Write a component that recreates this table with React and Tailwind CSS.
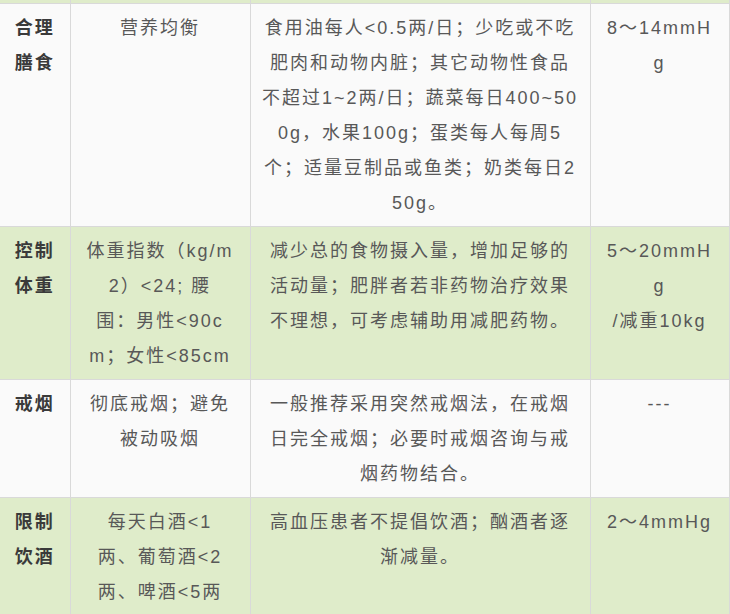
const rows = [
  {
    green: false,
    head: ["合理", "膳食"],
    target: ["营养均衡"],
    advice: [
      "食用油每人<0.5两/日；少吃或不吃",
      "肥肉和动物内脏；其它动物性食品",
      "不超过1~2两/日；蔬菜每日400~50",
      "0g，水果100g；蛋类每人每周5",
      "个；适量豆制品或鱼类；奶类每日2",
      "50g。",
    ],
    effect: ["8～14mmH", "g"],
  },
  {
    green: true,
    head: ["控制", "体重"],
    target: ["体重指数（kg/m", "2）<24; 腰", "围：男性<90c", "m；女性<85cm"],
    advice: [
      "减少总的食物摄入量，增加足够的",
      "活动量；肥胖者若非药物治疗效果",
      "不理想，可考虑辅助用减肥药物。",
    ],
    effect: ["5～20mmH", "g", "/减重10kg"],
  },
  {
    green: false,
    head: ["戒烟"],
    target: ["彻底戒烟；避免", "被动吸烟"],
    advice: [
      "一般推荐采用突然戒烟法，在戒烟",
      "日完全戒烟；必要时戒烟咨询与戒",
      "烟药物结合。",
    ],
    effect: ["---"],
  },
  {
    green: true,
    head: ["限制", "饮酒"],
    target: ["每天白酒<1", "两、葡萄酒<2", "两、啤酒<5两"],
    advice: ["高血压患者不提倡饮酒；酗酒者逐", "渐减量。"],
    effect: ["2～4mmHg"],
  },
];

function Lines({ lines }) {
  return lines.map((l, i) => (
    <div key={i} className="whitespace-nowrap">
      {l}
    </div>
  ));
}

export default function App() {
  const cell = "align-top text-center pt-[7px] pb-[5px] border-b border-r border-[#d9d9d9]";
  return (
    <div className="w-[730px] h-[614px] overflow-hidden bg-white text-[18px] leading-[35px] tracking-[2px] text-[#585858] font-['Liberation_Sans','Noto_Sans_CJK_SC',sans-serif]">
      <table className="border-collapse table-fixed w-[729px]">
        <colgroup>
          <col className="w-[70px]" />
          <col className="w-[180px]" />
          <col className="w-[340px]" />
          <col className="w-[139px]" />
        </colgroup>
        <tbody>
          <tr className="bg-[#dfecca] h-[3px]">
            <td className="border-b border-r border-[#d9d9d9] p-0" />
            <td className="border-b border-r border-[#d9d9d9] p-0" />
            <td className="border-b border-r border-[#d9d9d9] p-0" />
            <td className="border-b border-r border-[#d9d9d9] p-0" />
          </tr>
          {rows.map((r, i) => (
            <tr key={i} className={r.green ? "bg-[#dfecca]" : "bg-[#fafafa]"}>
              <td className={`${cell} font-bold text-[#3a3a3a]`}>
                <Lines lines={r.head} />
              </td>
              <td className={cell}>
                <Lines lines={r.target} />
              </td>
              <td className={cell}>
                <Lines lines={r.advice} />
              </td>
              <td className={cell}>
                <Lines lines={r.effect} />
              </td>
            </tr>
          ))}
        </tbody>
      </table>
    </div>
  );
}
